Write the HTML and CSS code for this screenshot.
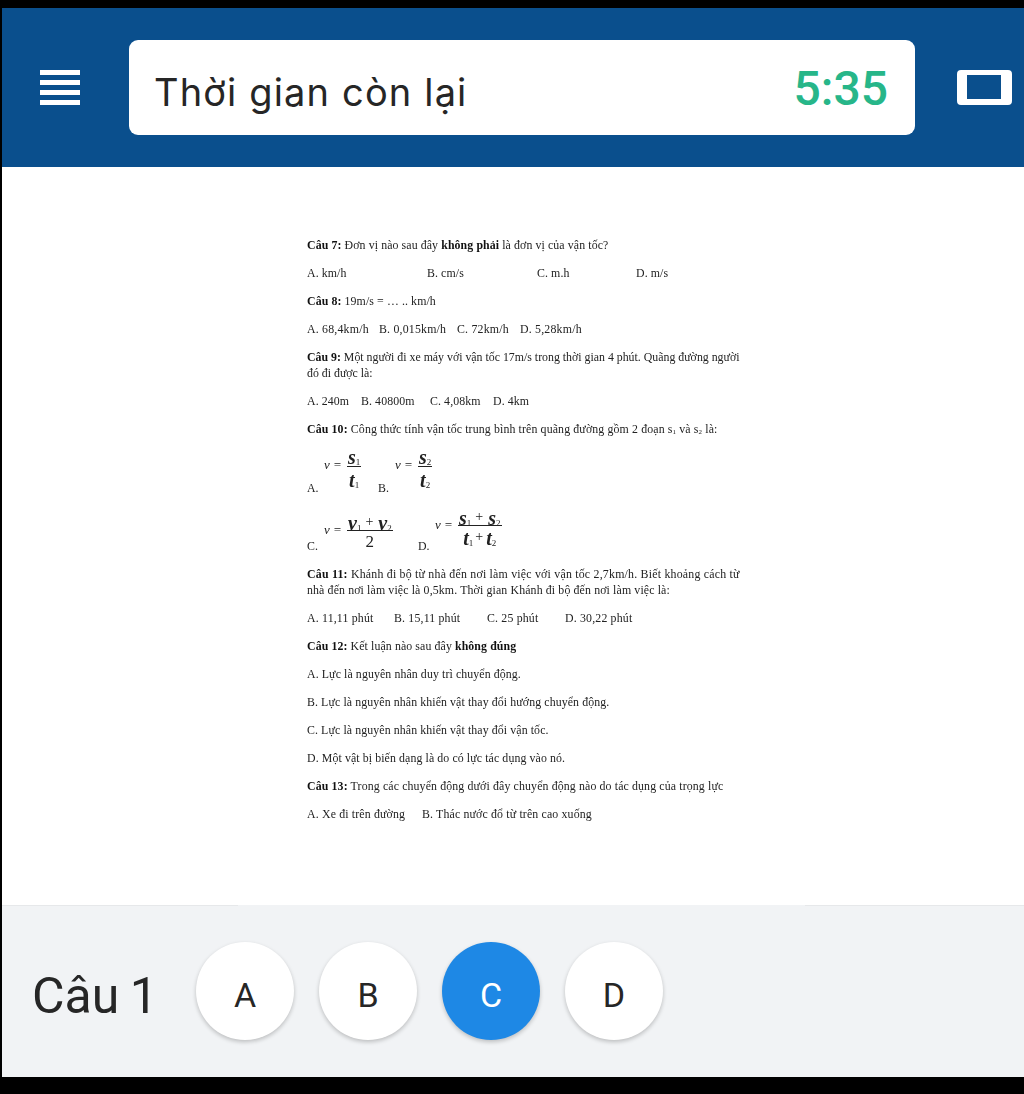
FILE: index.html
```html
<!DOCTYPE html>
<html lang="vi">
<head>
<meta charset="utf-8">
<title>Thời gian còn lại</title>
<link rel="stylesheet" href="styles.css">
</head>
<body>
<div class="app">
  <header class="topbar">
    <svg class="menu-icon" viewBox="0 0 40 35" aria-hidden="true">
      <path d="M0 0h40v5H0zM0 10h40v5H0zM0 20h40v5H0zM0 30h40v5H0z" fill="#fff"/>
    </svg>
    <div class="timer-box">
      <span class="timer-label">Thời gian còn lại</span>
      <span class="timer-value">5:35</span>
    </div>
    <svg class="sheet-icon" viewBox="0 0 55 35" aria-hidden="true">
      <path fill-rule="evenodd" fill="#fff" d="M4 0h47a4 4 0 0 1 4 4v27a4 4 0 0 1-4 4H4a4 4 0 0 1-4-4V4a4 4 0 0 1 4-4zM10 5v24h34V5z"/>
    </svg>
  </header>

  <main class="paper">
    <div class="doc">
      <p><b>Câu 7:</b> Đơn vị nào sau đây <b>không phải</b> là đơn vị của vận tốc?</p>
      <p class="opts opts-7"><span>A. km/h</span><span>B. cm/s</span><span>C. m.h</span><span>D. m/s</span></p>
      <p><b>Câu 8:</b> 19m/s = … .. km/h</p>
      <p class="opts opts-8"><span>A. 68,4km/h</span><span>B. 0,015km/h</span><span>C. 72km/h</span><span>D. 5,28km/h</span></p>
      <p class="tight"><b>Câu 9:</b> Một người đi xe máy với vận tốc 17m/s trong thời gian 4 phút. Quãng đường người<br>đó đi được là:</p>
      <p class="opts opts-9"><span>A. 240m</span><span>B. 40800m</span><span>C. 4,08km</span><span>D. 4km</span></p>
      <p class="wide"><b>Câu 10:</b> Công thức tính vận tốc trung bình trên quãng đường gồm 2 đoạn s<sub>1</sub> và s<sub>2</sub> là:</p>

      <div class="formula-row row-ab">
        <span class="letter">A.</span>
        <span class="formula"><i class="v">v =</i><span class="frac"><span class="num"><i>s</i><sub>1</sub></span><span class="den"><i>t</i><sub>1</sub></span></span></span>
        <span class="letter">B.</span>
        <span class="formula"><i class="v">v =</i><span class="frac"><span class="num"><i>s</i><sub>2</sub></span><span class="den"><i>t</i><sub>2</sub></span></span></span>
      </div>
      <div class="formula-row row-cd">
        <span class="letter">C.</span>
        <span class="formula"><i class="v">v =</i><span class="frac"><span class="num"><i>v</i><sub>1</sub><em>+</em><i>v</i><sub>2</sub></span><span class="den den-plain">2</span></span></span>
        <span class="letter">D.</span>
        <span class="formula formula-raised"><i class="v">v =</i><span class="frac"><span class="num"><i>s</i><sub>1</sub><em>+</em><i>s</i><sub>2</sub></span><span class="den"><i>t</i><sub>1</sub><em>+</em><i>t</i><sub>2</sub></span></span></span>
      </div>

      <p class="widest"><b>Câu 11:</b> Khánh đi bộ từ nhà đến nơi làm việc với vận tốc 2,7km/h. Biết khoảng cách từ<br><span class="wide">nhà đến nơi làm việc là 0,5km. Thời gian Khánh đi bộ đến nơi làm việc là:</span></p>
      <p class="opts opts-11"><span>A. 11,11 phút</span><span>B. 15,11 phút</span><span>C. 25 phút</span><span>D. 30,22 phút</span></p>
      <p><b>Câu 12:</b> Kết luận nào sau đây <b>không đúng</b></p>
      <p>A. Lực là nguyên nhân duy trì chuyển động.</p>
      <p>B. Lực là nguyên nhân khiến vật thay đổi hướng chuyển động.</p>
      <p>C. Lực là nguyên nhân khiến vật thay đổi vận tốc.</p>
      <p>D. Một vật bị biến dạng là do có lực tác dụng vào nó.</p>
      <p class="wide"><b>Câu 13:</b> Trong các chuyển động dưới đây chuyển động nào do tác dụng của trọng lực</p>
      <p class="opts opts-13"><span>A. Xe đi trên đường</span><span>B. Thác nước đổ từ trên cao xuống</span></p>
    </div>
  </main>

  <footer class="answerbar">
    <span class="question">Câu 1</span>
    <button class="choice" type="button">A</button>
    <button class="choice" type="button">B</button>
    <button class="choice selected" type="button">C</button>
    <button class="choice" type="button">D</button>
  </footer>
</div>
</body>
</html>
```

FILE: styles.css
```css
* { box-sizing: border-box; }

html, body {
  margin: 0;
  height: 100%;
  background: #000;
}

.app {
  width: 1024px;
  height: 1094px;
  padding: 8px 0 17px 2px;
  display: flex;
  flex-direction: column;
  overflow: hidden;
}

.topbar {
  height: 159px;
  flex: none;
  background: #0a4f8d;
  display: flex;
  align-items: center;
  padding: 0 12px 0 38px;
}

.menu-icon { width: 40px; height: 35px; flex: none; }

.timer-box {
  width: 786px;
  height: 95px;
  margin-left: 49px;
  margin-right: 42px;
  flex: none;
  background: #fff;
  border-radius: 9px;
  display: flex;
  align-items: center;
  justify-content: space-between;
  padding: 0 26px;
}

.timer-label {
  font-family: Inter, "Noto Sans", sans-serif;
  font-size: 38px;
  color: #262626;
  letter-spacing: 1.15px;
  margin-left: -1px;
  padding-top: 8px;
}

.timer-value {
  font-family: Roboto, sans-serif;
  font-size: 48px;
  font-weight: 500;
  color: #27b689;
  margin-right: 1px;
  padding-top: 2px;
}

.sheet-icon { width: 55px; height: 35px; flex: none; }

.paper {
  flex: 1;
  background: #fff;
  padding: 70px 0 0 305px;
}

.doc {
  font-family: "Liberation Serif", serif;
  font-size: 11.85px;
  line-height: 16px;
  letter-spacing: 0.1px;
  color: #222;
  white-space: nowrap;
  filter: blur(0.35px);
}

.doc p { margin: 0 0 12px; }
.doc b { color: #111; }
.doc sub { font-size: 7px; line-height: 0; vertical-align: -1px; }

.tight { letter-spacing: 0; }
.wide { letter-spacing: 0.13px; }
.widest { letter-spacing: 0.22px; }

.opts { display: grid; }
.opts-7 { grid-template-columns: 120px 110px 99px auto; }
.opts-8 { grid-template-columns: 72px 78px 63px auto; letter-spacing: 0.2px; }
.opts-9 { grid-template-columns: 54px 69px 63px auto; }
.opts-11 { grid-template-columns: 87px 93px 78px auto; letter-spacing: 0.17px; }
.opts-13 { grid-template-columns: 115px auto; letter-spacing: 0.15px; }

.formula-row {
  display: flex;
  align-items: flex-start;
  margin-bottom: 12px;
  letter-spacing: 0;
}
.row-ab { height: 47px; }
.row-cd { height: 46px; }

.letter { align-self: flex-end; width: 17px; }

.formula {
  display: flex;
  align-items: flex-start;
}
.row-ab .formula { width: 54px; }
.row-cd .formula:nth-of-type(2) { width: 94px; }
.row-cd .formula-raised { margin-top: -5px; }

.v {
  width: 23px;
  margin-top: 8px;
  font-size: 13px;
  line-height: 16px;
  flex: none;
}
.row-cd .v { margin-top: 14px; }

.frac {
  display: flex;
  flex-direction: column;
  align-items: center;
  font-size: 20px;
  line-height: 17px;
}
.frac i { font-weight: 700; font-style: italic; color: #222; }
.frac .num { border-bottom: 1px solid #222; padding: 0 1px; height: 18px; width: 100%; text-align: center; }
.frac .den { padding-top: 5px; height: 24px; }
.frac em { font-style: normal; font-weight: 400; font-size: 14px; vertical-align: 4px; margin: 0 3px 0 2px; }
.frac .num em { margin: 0 5px 0 4px; }
.frac sub { font-size: 9px; font-weight: 400; vertical-align: -1px; }
.row-cd .frac { margin-top: 5px; }
.row-cd .den { padding-top: 2px; }
.frac .den-plain { font-size: 17px; font-weight: 400; }

.answerbar {
  position: relative;
  height: 172px;
  flex: none;
  background: #f1f3f5;
  border-top: 1px solid #e6e8ea;
  display: flex;
  align-items: center;
  gap: 25px;
  padding: 0 0 2px 30px;
}
.answerbar::before {
  content: "";
  position: absolute;
  left: 236px;
  width: 567px;
  top: -1px;
  height: 1px;
  background: #f1f3f5;
}

.question {
  font-family: Roboto, sans-serif;
  font-size: 50px;
  color: #262626;
  width: 139px;
  padding-top: 10px;
  white-space: nowrap;
  word-spacing: -2px;
}

.choice {
  width: 98px;
  height: 98px;
  border: 0;
  padding: 8px 0 0;
  border-radius: 50%;
  background: #fff;
  box-shadow: 0 2px 4px rgba(0, 0, 0, 0.22);
  font-family: Roboto, sans-serif;
  font-size: 34px;
  color: #262626;
}

.choice.selected {
  background: #1e88e5;
  color: #fff;
}
```
